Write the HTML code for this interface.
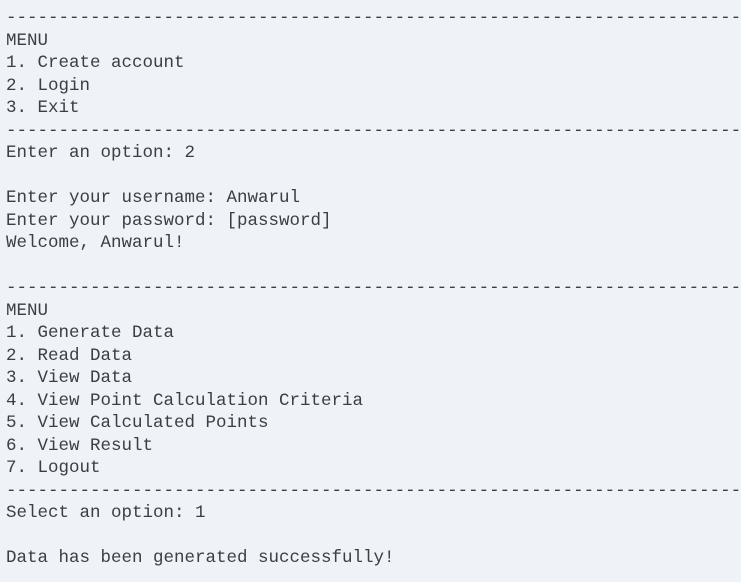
<!DOCTYPE html>
<html><head><style>
html,body{margin:0;padding:0;background:#eff2f7;width:741px;height:582px;overflow:hidden}
pre{margin:0;padding:7px 0 0 6px;font-family:"Liberation Mono",monospace;font-size:17.5px;line-height:22.5px;color:#3a3f46;white-space:pre;overflow:hidden}
</style></head><body><pre>--------------------------------------------------------------------------------
MENU
1. Create account
2. Login
3. Exit
--------------------------------------------------------------------------------
Enter an option: 2

Enter your username: Anwarul
Enter your password: [password]
Welcome, Anwarul!

--------------------------------------------------------------------------------
MENU
1. Generate Data
2. Read Data
3. View Data
4. View Point Calculation Criteria
5. View Calculated Points
6. View Result
7. Logout
--------------------------------------------------------------------------------
Select an option: 1

Data has been generated successfully!</pre></body></html>
